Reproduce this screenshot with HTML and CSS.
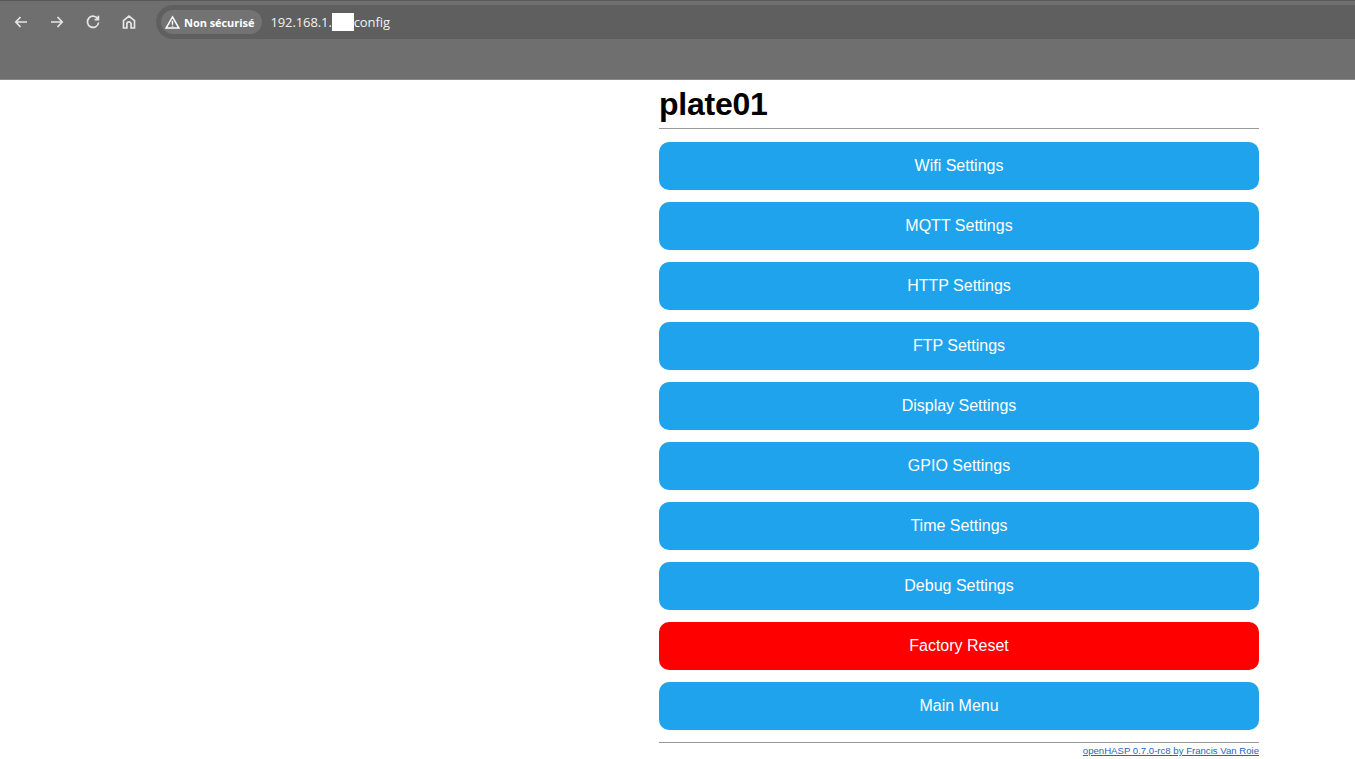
FILE: index.html
```html
<!DOCTYPE html>
<html>
<head>
    <title>plate01</title>
    <link rel="stylesheet" href="styles.css">
</head>
<body>
    <div class="browser-bar">
        <div class="toolbar">
            <svg class="nav-icon" viewBox="0 0 16 16"><path d="M14 8H3M7.500 3 2.800 8l4.700 5"/></svg>
            <svg class="nav-icon" viewBox="0 0 16 16"><path d="M2 8h11M8.500 3l4.700 5-4.700 5"/></svg>
            <svg class="nav-icon" viewBox="0 0 16 16"><path d="M13 5.200A5.600 5.600 0 1 0 13.600 8.500M13.400 1.800v3.800H9.600"/></svg>
            <svg class="nav-icon" viewBox="0 0 16 16"><path d="M2.500 14V6.600L8 2l5.500 4.600V14h-3.400V10a2.100 2.100 0 0 0-4.200 0v4z"/></svg>
            <div class="address">
                <div class="chip">
                    <svg class="warn" viewBox="0 0 14 14"><path d="M7 1.800 13 12.200H1zM7 5.400v3.600M7 10v1"/></svg>
                    <span>Non sécurisé</span>
                </div>
                <div class="url">192.168.1.<span class="mask"></span>config</div>
            </div>
        </div>
    </div>

    <div class="page">
        <h1>plate01</h1>
        <hr>
        <div class="menu">
            <a class="btn" href="#">Wifi Settings</a>
            <a class="btn" href="#">MQTT Settings</a>
            <a class="btn" href="#">HTTP Settings</a>
            <a class="btn" href="#">FTP Settings</a>
            <a class="btn" href="#">Display Settings</a>
            <a class="btn" href="#">GPIO Settings</a>
            <a class="btn" href="#">Time Settings</a>
            <a class="btn" href="#">Debug Settings</a>
            <a class="btn red" href="#">Factory Reset</a>
            <a class="btn" href="#">Main Menu</a>
        </div>
        <hr class="bottom-line">
        <div class="footer"><a href="#">openHASP 0.7.0-rc8 by Francis Van Roie</a></div>
    </div>
</body>
</html>
```

FILE: styles.css
```css
/* browser chrome */
html, body {
    margin: 0;
    padding: 0;
    background-color: #fff;
}

body {
    font-family: "Liberation Sans", Arial, sans-serif;
    height: 759px;
    overflow: hidden;
}

.browser-bar {
    height: 80px;
    box-sizing: border-box;
    padding-top: 4px;
    background-color: #6f6f6f;
    border-top: 1px solid #595959;
    border-bottom: 1px solid #8a8a8a;
}

.toolbar {
    display: flex;
    align-items: center;
    height: 34px;
    padding-left: 13px;
    gap: 20px;
}

.nav-icon {
    width: 16px;
    height: 16px;
    fill: none;
    stroke: #e6e6e6;
    stroke-width: 1.700;
}

.address {
    display: flex;
    align-items: center;
    flex: 1;
    height: 34px;
    margin-left: -1px;
    padding-left: 5px;
    background-color: #5f5f5f;
    border-radius: 17px 0 0 17px;
}

.chip {
    display: flex;
    align-items: center;
    gap: 4px;
    height: 24px;
    padding: 0 8px 0 4px;
    background-color: #737373;
    border-radius: 12px;
    color: #fff;
    font-family: "Open Sans", sans-serif;
    font-size: 11px;
    font-weight: 700;
    letter-spacing: -0.05px;
}

.warn {
    width: 15px;
    height: 15px;
    fill: none;
    stroke: #fff;
    stroke-width: 1.400;
}

.url {
    display: flex;
    align-items: center;
    margin-left: 8px;
    color: #f2f2f2;
    font-family: "Open Sans", sans-serif;
    font-size: 13px;
    letter-spacing: -0.1px;
}

.mask {
    display: inline-block;
    width: 22px;
    height: 18px;
    background-color: #fff;
}

/* page content */
.page {
    width: 600px;
    margin-left: 659px;
}

h1 {
    margin: 0;
    padding-top: 6px;
    font-size: 32px;
    line-height: 36px;
    letter-spacing: -0.25px;
    font-weight: 700;
    color: #000;
}

hr {
    height: 1px;
    margin: 6px 0 13px;
    border: 0;
    background-color: #999;
}

.menu {
    display: flex;
    flex-direction: column;
    gap: 12px;
}

.btn {
    display: block;
    height: 48px;
    line-height: 47px;
    border-radius: 10px;
    background-color: #1fa3ec;
    color: #fff;
    font-size: 16px;
    text-align: center;
    text-decoration: none;
}

.red {
    background-color: #f00;
}

.bottom-line {
    margin: 12px 0 2px;
}

.footer {
    text-align: right;
    font-size: 9.600px;
}

.footer a {
    color: #2467c0;
}
```
